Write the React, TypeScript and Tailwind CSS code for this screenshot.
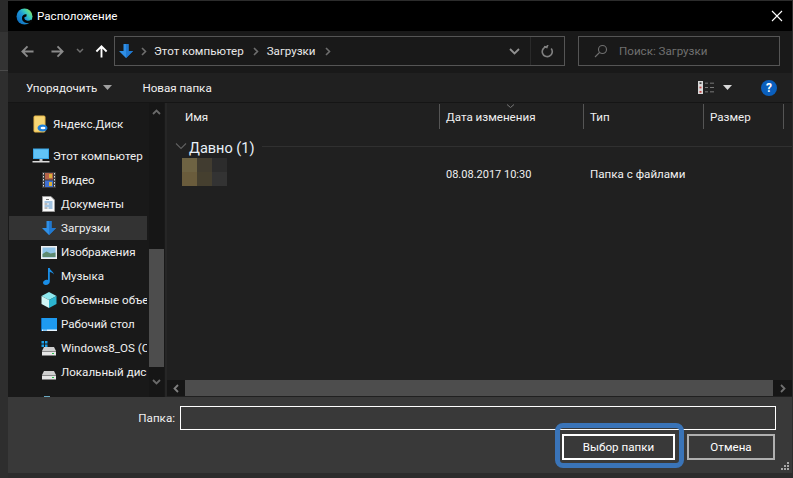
import React from "react";

const Chevron = ({ className = "" }: { className?: string }) => (
  <svg width="9" height="9" viewBox="0 0 9 9" className={className} fill="none" stroke="#6e6e6e" strokeWidth="1.6">
    <path d="M3 1l3.5 3.5L3 8" />
  </svg>
);

const Arrow = ({ dir, color }: { dir: "l" | "r" | "u"; color: string }) => {
  const rot = dir === "l" ? 0 : dir === "r" ? 180 : 90;
  return (
    <svg width="13" height="13" viewBox="0 0 14 14" fill="none" stroke={color} strokeWidth="2" style={{ transform: `rotate(${rot}deg)` }}>
      <path d="M13.500 7H1.500M7 1.500L1.500 7 7 12.500" />
    </svg>
  );
};

const DownArrow = ({ size = 16 }: { size?: number }) => (
  <svg width={size} height={size} viewBox="0 0 16 16">
    <path d="M5.500 1h5v7H15L8 15 1 8h4.500z" fill="#2f8fe6" />
    <path d="M8 1h2.500v7H15L8 15z" fill="#1f78d1" />
  </svg>
);

const Edge = () => (
  <svg width="17" height="17" viewBox="0 0 17 17">
    <defs>
      <linearGradient id="e1" x1="0" y1="1" x2="1" y2="0.200">
        <stop offset="0" stopColor="#0b5fb2" />
        <stop offset="0.500" stopColor="#1c96d8" />
        <stop offset="0.750" stopColor="#3ccfb8" />
        <stop offset="1" stopColor="#8fe05a" />
      </linearGradient>
    </defs>
    <circle cx="8.500" cy="8.500" r="8" fill="url(#e1)" />
    <path d="M16 12.500C12.500 15 7.800 14 7.200 10.800 6.800 8.500 8.500 7.200 10.500 7.600" fill="none" stroke="#050505" strokeWidth="2.400" />
  </svg>
);

const YaDisk = () => (
  <svg width="16" height="18" viewBox="0 0 16 18">
    <rect x="1" y="1" width="11" height="16" rx="1" fill="#f7d675" />
    <rect x="1" y="1" width="11" height="16" rx="1" fill="none" stroke="#e8b94a" />
    <ellipse cx="9.500" cy="13" rx="5" ry="3.500" fill="#1e7fd8" />
    <ellipse cx="10" cy="13" rx="2.500" ry="1.300" fill="#fff" />
  </svg>
);

const PC = () => (
  <svg width="18" height="16" viewBox="0 0 18 16">
    <rect x="1" y="0.500" width="16" height="10.500" fill="#3aa7e8" />
    <rect x="2" y="1.500" width="14" height="8.500" fill="#62c3f5" />
    <rect x="7.500" y="11" width="3" height="2" fill="#c8c8c8" />
    <rect x="0.500" y="13" width="17" height="1.500" fill="#dcdcdc" />
  </svg>
);

const Video = () => (
  <svg width="14" height="16" viewBox="0 0 14 16">
    <rect width="14" height="16" fill="#3a3a3a" />
    <rect x="3" y="1" width="8" height="6.500" fill="#b4624a" />
    <rect x="3" y="8.500" width="8" height="6.500" fill="#3f6fd0" />
    <rect x="7" y="2" width="3" height="4" fill="#d8b03a" />
    <rect x="7" y="10" width="3" height="4" fill="#d8b03a" />
    {[1, 4, 7, 10, 13].map((y) => (
      <React.Fragment key={y}>
        <rect x="1" y={y} width="1" height="1.500" fill="#ddd" />
        <rect x="12" y={y} width="1" height="1.500" fill="#ddd" />
      </React.Fragment>
    ))}
  </svg>
);

const Doc = () => (
  <svg width="13" height="16" viewBox="0 0 13 16">
    <path d="M.5.500H9L12.500 4v11.500H.5z" fill="#fafafa" stroke="#9a9a9a" />
    <path d="M2.500 6h8M6.500 8h4M2.500 10h8M6.500 12h4" stroke="#4a8cc8" strokeWidth="1" />
    <path d="M2.500 8h3M2.500 12h3M4 3.500h3" stroke="#777" strokeWidth="1" />
  </svg>
);

const Pictures = () => (
  <svg width="16" height="13" viewBox="0 0 16 13">
    <rect width="16" height="13" fill="#efefef" />
    <rect x="1.500" y="1.500" width="13" height="10" fill="#8fc4e8" />
    <path d="M1.500 8l4-2.500 4 2 5-1v4.500h-13z" fill="#5e8a70" />
  </svg>
);

const Music = () => (
  <svg width="12" height="17" viewBox="0 0 12 17">
    <path d="M5 0h1.800c.2 2.500 3.700 3.500 4.200 6.500-1-1.500-2.800-2.300-4.200-2.500v9.500C6.800 15.500 4.800 17 2.800 17 1 17 0 16 0 14.800 0 13 2 11.700 3.500 11.700c.6 0 1.100.1 1.500.3z" fill="#1a8ee6" />
  </svg>
);

const Cube = () => (
  <svg width="16" height="16" viewBox="0 0 16 16">
    <path d="M8 0l7.500 4L8 8 .5 4z" fill="#8ee8ee" />
    <path d="M.5 4L8 8v8L.5 12z" fill="#d0f6f6" />
    <path d="M15.500 4L8 8v8l7.500-4z" fill="#2cb4d0" />
  </svg>
);

const Desktop = () => (
  <svg width="16" height="13" viewBox="0 0 16 13">
    <rect width="16" height="13" fill="#1e9af0" />
    <rect x="0" y="11.500" width="16" height="1.500" fill="#e8f5ff" />
    <rect x="0" y="0" width="1" height="13" fill="#0d6fc0" />
    <rect x="2" y="11.500" width="4" height="1" fill="#1e9af0" />
  </svg>
);

const Drive = ({ win }: { win?: boolean }) => (
  <svg width="16" height="15" viewBox="0 0 16 15">
    {win && (
      <g fill="#1ca0e8">
        <rect x="0.500" y="0" width="2.500" height="2.500" />
        <rect x="4" y="0" width="2.500" height="2.500" />
        <rect x="0.500" y="3.500" width="2.500" height="2.500" />
        <rect x="4" y="3.500" width="2.500" height="2.500" />
      </g>
    )}
    <path d="M3 6h10l2 4H1z" fill="#cfcfcf" />
    <rect x="1" y="10" width="14" height="4.500" fill="#e6e6e6" />
    <rect x="1" y="10" width="14" height="1" fill="#8a8a8a" />
    <rect x="11" y="12" width="2" height="1" fill="#27c24c" />
  </svg>
);

const Clipped = () => (
  <svg width="16" height="16" viewBox="0 0 16 16">
    <rect x="3" y="8" width="6" height="8" fill="#6aa8c0" />
  </svg>
);

const Row = ({ icon, label, top, selected }: { icon: React.ReactNode; label: string; top?: boolean; selected?: boolean }) => (
  <div className={`flex h-6 items-center shrink-0 ${selected ? "bg-[#333333]" : ""}`}>
    <div className={`flex justify-center shrink-0 ${top ? "w-[18px] ml-[23px] mr-[3px]" : "w-[19px] ml-[30px] mr-[3px]"}`}>{icon}</div>
    <span className="whitespace-nowrap text-[#f0f0f0]">{label}</span>
  </div>
);

const Sep = () => <div className="w-px h-[25px] mt-px self-start bg-[#555555] shrink-0" />;

const GripDots = () => (
  <svg width="8" height="8" viewBox="0 0 8 8" fill="#a8a8a8">
    <rect x="6" y="0" width="2" height="2" />
    <rect x="3" y="3" width="2" height="2" />
    <rect x="6" y="3" width="2" height="2" />
    <rect x="0" y="6" width="2" height="2" />
    <rect x="3" y="6" width="2" height="2" />
    <rect x="6" y="6" width="2" height="2" />
  </svg>
);

export default function App() {
  return (
    <div className="flex w-[793px] h-[478px] bg-[#2c2c2c] overflow-hidden text-[11.6px] leading-4 text-[#f0f0f0] font-['Roboto','Liberation_Sans',sans-serif]">
      <div className="w-2 shrink-0 flex flex-col">
        <div className="h-8 bg-[#2a2a2a] shrink-0" />
        <div className="h-[38px] bg-[#333333] shrink-0" />
        <div className="h-px bg-[#4a4a4a] shrink-0" />
        <div className="flex-1 bg-[#2e2e2e]" />
      </div>
      <div className="relative flex flex-col w-[784px] h-[472px] mt-px shrink-0">
        {/* Title */}
        <div className="flex items-center h-[30px] bg-black shrink-0 pl-2 pr-[9px]">
          <Edge />
          <span className="ml-[4px] text-white">Расположение</span>
          <svg width="12" height="12" viewBox="0 0 12 12" className="ml-auto" stroke="#fff" strokeWidth="1.100">
            <path d="M1 1l10 10M11 1L1 11" />
          </svg>
        </div>

        {/* Nav */}
        <div className="flex items-center h-[42px] bg-[#191919] shrink-0 pb-[2px]">
          <div className="w-[106px] flex items-center shrink-0 pl-[13px]">
            <Arrow dir="l" color="#8a8a8a" />
            <div className="w-[17px]" />
            <Arrow dir="r" color="#8a8a8a" />
            <svg width="8" height="6" viewBox="0 0 8 6" className="ml-[12px]" fill="none" stroke="#6e6e6e" strokeWidth="1.500">
              <path d="M1 1l3 3 3-3" />
            </svg>
            <div className="ml-[11px]">
              <Arrow dir="u" color="#ffffff" />
            </div>
          </div>
          <div className="flex items-center w-[451px] h-[30px] border border-[#555555] shrink-0">
            <div className="ml-[3px]">
              <DownArrow />
            </div>
            <Chevron className="ml-[5px]" />
            <span className="ml-[6px] text-[#e8e8e8]">Этот компьютер</span>
            <Chevron className="ml-[7px]" />
            <span className="ml-[7px] text-[#e8e8e8]">Загрузки</span>
            <Chevron className="ml-[7px]" />
            <svg width="11" height="7" viewBox="0 0 11 7" className="ml-auto mr-[10px]" fill="none" stroke="#909090" strokeWidth="1.800">
              <path d="M1 1l4.500 4.500L10 1" />
            </svg>
            <div className="w-px h-full bg-[#2a2a2a]" />
            <svg width="13" height="13" viewBox="0 0 13 13" className="mx-[10px]" fill="none" stroke="#808080" strokeWidth="1.600">
              <path d="M4 2.300A5 5 0 1 0 9 2.500M4.500 0v3H1.500" transform="rotate(20 6.500 6.500)" />
            </svg>
          </div>
          <div className="flex items-center w-[202px] h-[30px] border border-[#555555] ml-[13px] shrink-0">
            <svg width="14" height="14" viewBox="0 0 14 14" className="ml-[15px]" fill="none" stroke="#707070" strokeWidth="1.100">
              <circle cx="8.500" cy="5.500" r="4" />
              <path d="M5.500 8.500L1 13" />
            </svg>
            <span className="ml-[11px] text-[#707070]">Поиск: Загрузки</span>
          </div>
        </div>

        {/* Toolbar */}
        <div className="flex items-center h-[30px] bg-[#202020] shrink-0 border-b border-[#151515]">
          <span className="ml-[18px]">Упорядочить</span>
          <svg width="9" height="5" viewBox="0 0 9 5" className="ml-[6px]" fill="#a0a0a0">
            <path d="M0 0h9L4.500 5z" />
          </svg>
          <span className="ml-[30px]">Новая папка</span>
          <svg width="16" height="13" viewBox="0 0 16 15" preserveAspectRatio="none" className="ml-auto">
            <rect width="5" height="15" fill="#d8d8d8" />
            <rect x="1.500" y="1.500" width="2" height="2" fill="#444" />
            <rect x="1.500" y="6.500" width="2" height="2" fill="#c04040" />
            <rect x="1.500" y="11.500" width="2" height="2" fill="#c04040" />
            <path d="M7 2.500h3M12 2.500h4M7 7.500h3M12 7.500h4M7 12.500h3M12 12.500h4" stroke="#808080" />
          </svg>
          <svg width="9" height="5" viewBox="0 0 9 5" className="ml-[9px]" fill="#d8d8d8">
            <path d="M0 0h9L4.500 5z" />
          </svg>
          <div className="ml-[29px] mr-[15px] w-4 h-4 rounded-full bg-[#0a5fbd] flex items-center justify-center text-white font-bold text-[12px] leading-none">?</div>
        </div>

        {/* Main */}
        <div className="flex flex-1 min-h-0 bg-[#202020]">
          <div className="flex w-[157px] shrink-0 bg-[#191919] overflow-hidden">
            <div className="w-[138px] shrink-0 ml-px flex flex-col overflow-hidden pt-[9px]">
              <Row top icon={<YaDisk />} label="Яндекс.Диск" />
              <div className="h-2 shrink-0" />
              <Row top icon={<PC />} label="Этот компьютер" />
              <Row icon={<Video />} label="Видео" />
              <Row icon={<Doc />} label="Документы" />
              <Row selected icon={<DownArrow />} label="Загрузки" />
              <Row icon={<Pictures />} label="Изображения" />
              <Row icon={<Music />} label="Музыка" />
              <Row icon={<Cube />} label="Объемные объекты" />
              <Row icon={<Desktop />} label="Рабочий стол" />
              <Row icon={<Drive win />} label="Windows8_OS (C:)" />
              <Row icon={<Drive />} label="Локальный диск (D:)" />
              <Row icon={<Clipped />} label="" />
            </div>
            <div className="w-[15px] ml-[2px] shrink-0 flex flex-col bg-[#161616]">
              <div className="h-[18px] flex items-center justify-center shrink-0">
                <svg width="9" height="6" viewBox="0 0 9 6" fill="none" stroke="#6a6a6a" strokeWidth="1.800"><path d="M1 5l3.500-3.500L8 5" /></svg>
              </div>
              <div className="h-[128px] shrink-0" />
              <div className="h-[118px] bg-[#4d4d4d] shrink-0" />
              <div className="flex-1 flex items-center justify-center">
                <svg width="9" height="6" viewBox="0 0 9 6" fill="none" stroke="#6a6a6a" strokeWidth="1.800"><path d="M1 1l3.500 3.500L8 1" /></svg>
              </div>
            </div>
          </div>
          <div className="w-[2px] bg-[#262626] shrink-0" />
          <div className="flex-1 min-w-0 flex flex-col">
            <div className="relative flex h-[26px] shrink-0 items-center">
              <div className="w-[272px] shrink-0 pl-[18px] pt-[1px]">Имя</div>
              <Sep />
              <div className="w-[143px] shrink-0 pl-[6px] pt-[1px]">Дата изменения</div>
              <Sep />
              <div className="w-[119px] shrink-0 pl-[6px] pt-[1px]">Тип</div>
              <Sep />
              <div className="w-[79px] shrink-0 pl-[6px] pt-[1px]">Размер</div>
              <Sep />
              <svg width="7" height="4" viewBox="0 0 7 4" className="absolute left-[340px] top-px" fill="none" stroke="#777" strokeWidth="1"><path d="M0 .5l3.500 3 3.500-3" /></svg>
            </div>
            <div className="flex items-center h-[23px] shrink-0 mt-[6px] pl-[8px]">
              <svg width="12" height="7" viewBox="0 0 12 7" fill="none" stroke="#606060" strokeWidth="1.100"><path d="M1 .5l5 5 5-5" /></svg>
              <span className="ml-[2px] text-[14.500px] pt-[5px] text-[#e8f0f8]">Давно (1)</span>
              <div className="flex-1 h-px bg-[#303030] ml-[8px]" />
            </div>
            <div className="flex items-start shrink-0 h-[28px]">
              <div className="ml-[15px] w-[45px] grid grid-cols-3 grid-rows-2 h-[28px] shrink-0">
                <div className="bg-[#6e6343]" />
                <div className="bg-[#413c30]" />
                <div className="bg-[#2c2c2c]" />
                <div className="bg-[#6a5c3c]" />
                <div className="bg-[#453f2f]" />
                <div className="bg-[#333333]" />
              </div>
              <div className="ml-[219px] w-[144px] shrink-0 pt-[9px] text-[11px]">08.08.2017 10:30</div>
              <div className="pt-[8px]">Папка с файлами</div>
            </div>
            <div className="flex-1" />
            <div className="flex h-[16px] shrink-0 mb-px bg-[#161616]">
              <div className="w-[18px] flex items-center justify-center shrink-0">
                <svg width="6" height="9" viewBox="0 0 6 9" fill="none" stroke="#808080" strokeWidth="1.800"><path d="M5 1L1.500 4.500 5 8" /></svg>
              </div>
              <div className="flex-1 bg-[#4d4d4d]" />
              <div className="w-[19px] flex items-center justify-center shrink-0">
                <svg width="6" height="9" viewBox="0 0 6 9" fill="none" stroke="#707070" strokeWidth="1.800"><path d="M1 1l3.500 3.500L1 8" /></svg>
              </div>
            </div>
          </div>
        </div>

        {/* Bottom */}
        <div className="h-[76px] bg-[#393939] shrink-0 pt-[9px]">
          <div className="flex items-center h-6">
            <span className="ml-[129px] w-[38px] text-right text-[#f0f0f0]">Папка:</span>
            <div className="ml-[5px] w-[596px] h-6 border border-white" />
          </div>
          <div className="flex justify-end mt-[4px] pr-[17px] gap-[12px]">
            <div className="w-[113px] h-[26px] border-2 border-white flex items-center justify-center text-white">Выбор папки</div>
            <div className="w-[88px] h-[26px] border-2 border-[#b0b0b0] flex items-center justify-center text-white">Отмена</div>
          </div>
        </div>

        <div className="absolute right-[3px] bottom-[3px]"><GripDots /></div>
        <div className="absolute left-[547px] top-[422px] w-[129px] h-[45px] border-[5px] border-[#3a74b8] rounded-[8px]" />
      </div>
    </div>
  );
}
